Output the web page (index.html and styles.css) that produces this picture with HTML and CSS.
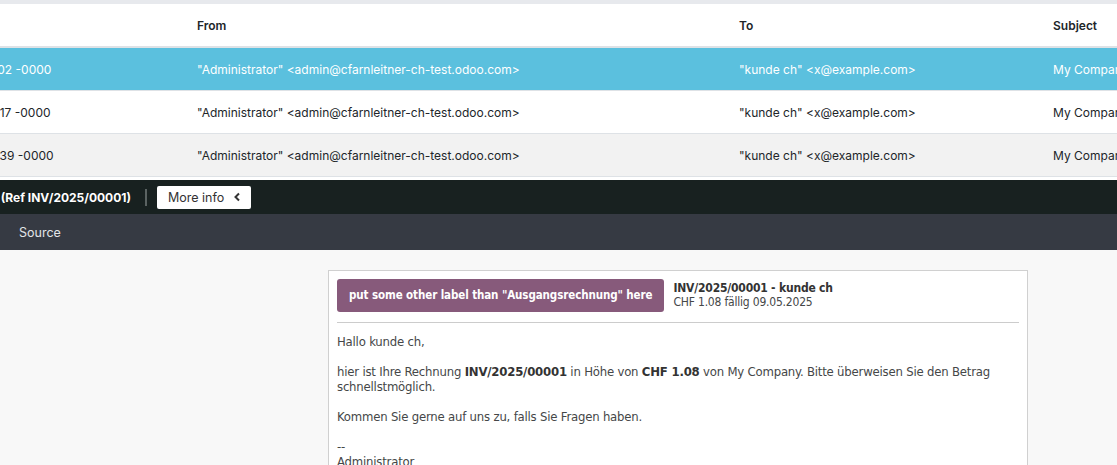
FILE: index.html
```html
<!DOCTYPE html>
<html lang="en">
<head>
    <meta charset="UTF-8">
    <meta name="viewport" content="width=device-width, initial-scale=1.0">
    <title>Mail Source</title>
    <link rel="stylesheet" href="styles.css">
</head>
<body>
    <div class="list">
        <table class="mail-table">
            <thead>
                <tr>
                    <th class="col-date">Date</th>
                    <th class="col-from">From</th>
                    <th class="col-to">To</th>
                    <th class="col-subject">Subject</th>
                </tr>
            </thead>
            <tbody>
                <tr class="selected">
                    <td>Fri, 09 May 2025 09:41:02 -0000</td>
                    <td>"Administrator" &lt;admin@cfarnleitner-ch-test.odoo.com&gt;</td>
                    <td>"kunde ch" &lt;x@example.com&gt;</td>
                    <td>My Company Rechnung (Ref INV/2025/00001)</td>
                </tr>
                <tr>
                    <td>Fri, 09 May 2025 09:38:17 -0000</td>
                    <td>"Administrator" &lt;admin@cfarnleitner-ch-test.odoo.com&gt;</td>
                    <td>"kunde ch" &lt;x@example.com&gt;</td>
                    <td>My Company Rechnung (Ref INV/2025/00001)</td>
                </tr>
                <tr class="striped">
                    <td>Fri, 09 May 2025 09:35:39 -0000</td>
                    <td>"Administrator" &lt;admin@cfarnleitner-ch-test.odoo.com&gt;</td>
                    <td>"kunde ch" &lt;x@example.com&gt;</td>
                    <td>My Company Rechnung (Ref INV/2025/00001)</td>
                </tr>
            </tbody>
        </table>
    </div>

    <div class="title-bar">
        <div class="title-clip">
            <span class="title">My Company Rechnung (Ref INV/2025/00001)</span>
        </div>
        <span class="divider"></span>
        <button class="more-info">More info
            <svg width="8" height="10" viewBox="0 0 8 10"><path d="M6 1.5 L2.5 5 L6 8.5" fill="none" stroke="#333" stroke-width="2"/></svg>
        </button>
    </div>

    <div class="tab-bar">
        <span class="tab">Source</span>
    </div>

    <div class="preview">
        <div class="mail-card">
            <div class="mail-head">
                <span class="doc-label">put some other label than "Ausgangsrechnung" here</span>
                <div class="doc-info">
                    <strong>INV/2025/00001 - kunde ch</strong>
                    <span>CHF 1.08 fällig 09.05.2025</span>
                </div>
            </div>
            <div class="mail-body">
                Hallo kunde ch,<br><br>
                hier ist Ihre Rechnung <strong>INV/2025/00001</strong> in Höhe von <strong>CHF 1.08</strong> von My Company. Bitte überweisen Sie den Betrag schnellstmöglich.<br><br>
                Kommen Sie gerne auf uns zu, falls Sie Fragen haben.<br><br>
                --<br>
                Administrator
            </div>
        </div>
    </div>
</body>
</html>
```

FILE: styles.css
```css
body {
    margin: 0;
    padding: 0;
    overflow: hidden;
    font-family: Inter, 'Noto Sans', sans-serif;
    font-size: 12px;
    color: #212529;
    background-color: #f8f8f8;
}

.list {
    overflow: hidden;
    border-top: 4px solid #e7e9ed;
    background-color: #fff;
    padding-bottom: 3px;
}

.mail-table {
    border-collapse: collapse;
    table-layout: fixed;
    width: 1498px;
    margin-left: -145px;
    white-space: nowrap;
}

.mail-table th,
.mail-table td {
    text-align: left;
    padding: 0 0 0 8px;
    height: 42px;
    overflow: hidden;
    border-bottom: 1px solid #dee2e6;
}

.mail-table th {
    font-weight: 600;
    font-size: 12px;
    border-bottom: 2px solid #dee2e6;
}

.col-date { width: 326px; }
.col-from { width: 534px; }
.col-to { width: 306px; }
.col-subject { width: 300px; }

.mail-table tr.selected td {
    background-color: #5bc0de;
    color: #fff;
}

.mail-table tr.striped td {
    background-color: #f2f2f2;
}

.title-bar {
    display: flex;
    align-items: center;
    height: 34px;
    background-color: #182120;
    overflow: hidden;
}

.title-clip {
    display: flex;
    justify-content: flex-end;
    width: 131px;
    flex-shrink: 0;
    overflow: hidden;
}

.title {
    flex-shrink: 0;
    color: #fff;
    font-weight: 700;
    font-size: 12px;
    white-space: nowrap;
}

.divider {
    width: 2px;
    height: 17px;
    background-color: #5b6362;
    margin: 0 10px 0 14px;
}

.more-info {
    display: flex;
    align-items: center;
    gap: 9px;
    height: 23px;
    padding: 0 10px 0 11px;
    border: none;
    border-radius: 2px;
    background-color: #fff;
    color: #333;
    font-family: Inter, 'Noto Sans', sans-serif;
    font-size: 12.5px;
}

.tab-bar {
    height: 36px;
    display: flex;
    align-items: center;
    background-color: #363a43;
}

.tab {
    margin-left: 19px;
    color: #e2e4e7;
    font-size: 12.5px;
}

.preview {
    padding: 20px 0 0 328px;
}

.mail-card {
    width: 682px;
    padding: 8px;
    background-color: #fff;
    border: 1px solid #d0d0d0;
    font-family: 'Liberation Sans Narrow', 'DejaVu Sans Condensed', 'Liberation Sans', sans-serif;
    font-size: 13px;
    letter-spacing: -0.2px;
    color: #454748;
    line-height: 15px;
}

.mail-head {
    display: flex;
    align-items: flex-start;
    gap: 9px;
    padding-bottom: 10px;
    border-bottom: 1px solid #ccc;
}

.doc-label {
    display: block;
    background-color: #875a7b;
    color: #fff;
    font-weight: 700;
    font-size: 11.5px;
    letter-spacing: -0.1px;
    padding: 9px 12px;
    border-radius: 3px;
    white-space: nowrap;
}

.doc-info {
    display: flex;
    flex-direction: column;
    padding-top: 2px;
    font-size: 12px;
    line-height: 14px;
}

.doc-info strong {
    color: #333;
}

.mail-body {
    padding-top: 11px;
}

.mail-body strong {
    color: #333;
}
```
